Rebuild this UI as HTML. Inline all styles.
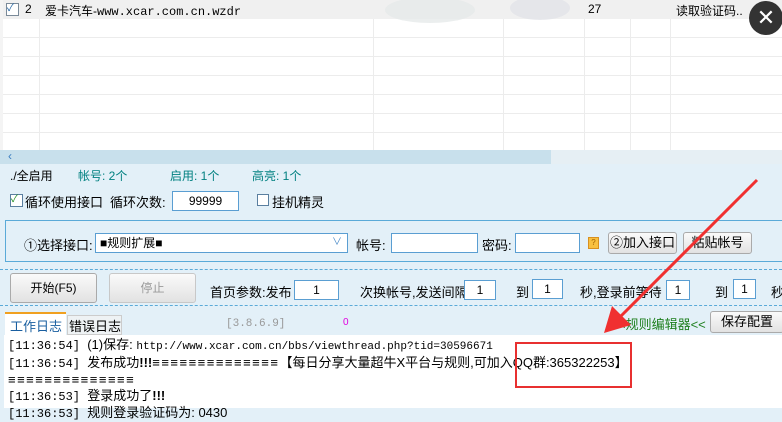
<!DOCTYPE html><html><head><meta charset="utf-8"><style>
body{margin:0;width:782px;height:408px;overflow:hidden;background:#e3f0f8;font-family:"Liberation Sans","Noto Sans CJK SC",sans-serif;font-size:12px;color:#000;position:relative}
.a{position:absolute;white-space:nowrap}
.in{position:absolute;background:#fff;border:1px solid #5a9ed2;height:18px;box-sizing:border-box;text-align:center;line-height:18px;font-size:12px}
.btn{position:absolute;background:linear-gradient(#fafafa,#e2e2e2);border:1px solid #aaa;border-radius:3px;box-sizing:border-box;text-align:center}
.mono{font-family:"Liberation Mono","Noto Sans CJK SC",monospace}
</style></head><body>
<div class="a" style="left:0;top:0;width:782px;height:150px;background:#fff"></div>
<div class="a" style="left:0;top:0;width:782px;height:19px;background:#f0f0f0"></div>
<svg class="a" style="left:0;top:0" width="782" height="150">
<g stroke="#ececec" stroke-width="1">
<line x1="0" y1="37.5" x2="782" y2="37.5"/><line x1="0" y1="56.5" x2="782" y2="56.5"/><line x1="0" y1="75.5" x2="782" y2="75.5"/><line x1="0" y1="94.5" x2="782" y2="94.5"/><line x1="0" y1="113.5" x2="782" y2="113.5"/><line x1="0" y1="132.5" x2="782" y2="132.5"/>
<line x1="39.5" y1="19" x2="39.5" y2="150"/><line x1="373.5" y1="19" x2="373.5" y2="150"/><line x1="503.5" y1="19" x2="503.5" y2="150"/><line x1="584.5" y1="19" x2="584.5" y2="150"/><line x1="630.5" y1="19" x2="630.5" y2="150"/><line x1="670.5" y1="19" x2="670.5" y2="150"/>
</g>
<rect x="0" y="0" width="3" height="150" fill="#f4f4f4"/>
<ellipse cx="430" cy="10" rx="45" ry="13" fill="#e6eaea" opacity=".8"/><ellipse cx="540" cy="8" rx="30" ry="12" fill="#e2e4e8" opacity=".8"/>
</svg>
<div class="a" style="left:6px;top:3px;width:11px;height:11px;border:1px solid #7a8a99;background:#fff;font-size:10px;line-height:10px;color:#1a5fa0">✓</div>
<div class="a" style="left:25px;top:2px">2</div>
<div class="a" style="left:45px;top:2px">爱卡汽车-<span class="mono" style="font-size:12px">www.xcar.com.cn.wzdr</span></div>
<div class="a" style="left:588px;top:2px">27</div>
<div class="a" style="left:676px;top:2px">读取验证码..</div>
<div class="a" style="left:749px;top:1px;width:34px;height:34px;border-radius:50%;background:#333;color:#fff;font-size:22px;line-height:33px;text-align:center">✕</div>
<div class="a" style="left:0;top:150px;width:551px;height:14px;background:#c8e0ec"></div>
<div class="a" style="left:551px;top:150px;width:231px;height:14px;background:#e6eff4"></div>
<div class="a" style="left:8px;top:149px;color:#3a7dc0;font-size:12px">‹</div>
<div class="a" style="left:10px;top:167px">./全启用</div>
<div class="a" style="left:78px;top:167px;color:#008080">帐号: 2个</div>
<div class="a" style="left:170px;top:167px;color:#008080">启用: 1个</div>
<div class="a" style="left:252px;top:167px;color:#008080">高亮: 1个</div>
<div class="a" style="left:10px;top:194px;width:11px;height:11px;border:1px solid #5a7fa0;background:#fff;font-size:10px;line-height:10px;color:#1a8a1a">✓</div>
<div class="a" style="left:25px;top:192px;font-size:13px">循环使用接口</div>
<div class="a" style="left:110px;top:192px;font-size:13px">循环次数:</div>
<div class="in" style="left:172px;top:191px;width:67px;height:20px">99999</div>
<div class="a" style="left:257px;top:194px;width:10px;height:10px;border:1px solid #5a7fa0;background:#fff"></div>
<div class="a" style="left:272px;top:192px;font-size:13px">挂机精灵</div>
<div class="a" style="left:5px;top:220px;width:790px;height:42px;border:1px solid #5aaad8;box-sizing:border-box"></div>
<div class="a" style="left:24px;top:235px;font-size:13px">①选择接口:</div>
<div class="in" style="left:95px;top:233px;width:253px;height:20px;text-align:left;padding-left:4px">■规则扩展■<span style="position:absolute;right:5px;color:#4a8ac8;font-size:10px">∨</span></div>
<div class="a" style="left:356px;top:235px;font-size:13px">帐号:</div>
<div class="in" style="left:391px;top:233px;width:87px;height:20px"></div>
<div class="a" style="left:482px;top:235px;font-size:13px">密码:</div>
<div class="in" style="left:515px;top:233px;width:65px;height:20px"></div>
<div class="a" style="left:588px;top:237px;width:9px;height:10px;background:#f8c040;border:1px solid #d89020;font-size:8px;line-height:10px;text-align:center;color:#a06000">?</div>
<div class="btn" style="left:608px;top:232px;width:69px;height:22px;line-height:20px;font-size:13px">②加入接口</div>
<div class="btn" style="left:683px;top:232px;width:69px;height:22px;line-height:20px;font-size:13px">粘贴帐号</div>
<div class="a" style="left:0;top:269px;width:782px;border-top:1px dashed #5aaad8"></div>
<div class="a" style="left:0;top:305px;width:782px;border-top:1px dashed #5aaad8"></div>
<div class="btn" style="left:10px;top:273px;width:87px;height:30px;line-height:28px">开始(F5)</div>
<div class="btn" style="left:109px;top:273px;width:87px;height:30px;line-height:28px;color:#999;border-color:#c8c8c8">停止</div>
<div class="a" style="left:210px;top:282px;font-size:13px">首页参数:发布</div>
<div class="in" style="left:294px;top:280px;width:45px;height:20px">1</div>
<div class="a" style="left:360px;top:282px;font-size:13px">次换帐号,发送间隔</div>
<div class="in" style="left:464px;top:280px;width:32px;height:20px">1</div>
<div class="a" style="left:516px;top:282px;font-size:13px">到</div>
<div class="in" style="left:532px;top:279px;width:31px;height:20px">1</div>
<div class="a" style="left:580px;top:282px;font-size:13px">秒,登录前等待</div>
<div class="in" style="left:666px;top:280px;width:24px;height:20px">1</div>
<div class="a" style="left:715px;top:282px;font-size:13px">到</div>
<div class="in" style="left:733px;top:279px;width:23px;height:20px">1</div>
<div class="a" style="left:771px;top:282px;font-size:13px">秒</div>
<div class="a" style="left:5px;top:312px;width:61px;height:23px;background:#fff;border-top:2px solid #f0a020;box-sizing:border-box"></div>
<div class="a" style="left:10px;top:316px;color:#1a5fa0;font-size:13px">工作日志</div>
<div class="a" style="left:67px;top:315px;width:55px;height:20px;background:#eef2f4;border:1px solid #ccc;box-sizing:border-box"></div>
<div class="a" style="left:69px;top:316px;font-size:13px">错误日志</div>
<div class="a mono" style="left:226px;top:318px;color:#999;font-size:11px">[3.8.6.9]</div>
<div class="a" style="left:343px;top:317px;color:#e000e0;font-size:10px">0</div>
<div class="a" style="left:618px;top:314px;color:#208020;font-size:13px">&lt;规则编辑器&lt;&lt;</div>
<div class="btn" style="left:710px;top:311px;width:74px;height:22px;line-height:20px;font-size:13px">保存配置</div>
<div class="a" style="left:4px;top:335px;width:778px;height:73px;background:#fff"></div>
<div class="a" style="left:8px;top:337px;line-height:16px;font-size:13px"><span class="mono" style="font-size:12px">[11:36:54] </span>(1)保存: <span class="mono" style="font-size:11px">http://www.xcar.com.cn/bbs/viewthread.php?tid=30596671</span><br><span class="mono" style="font-size:12px">[11:36:54] </span>发布成功<b>!!!</b><span style="letter-spacing:1.5px">≡≡≡≡≡≡≡≡≡≡≡≡≡≡</span>【每日分享大量超牛X平台与规则,可加入QQ群:365322253】<br><span style="letter-spacing:1.5px">≡≡≡≡≡≡≡≡≡≡≡≡≡≡</span><br><span class="mono" style="font-size:12px">[11:36:53] </span>登录成功了<b>!!!</b><br><span class="mono" style="font-size:12px">[11:36:53] </span>规则登录验证码为: 0430</div>
<div class="a" style="left:515px;top:342px;width:117px;height:46px;border:2px solid #e83030;box-sizing:border-box"></div>
<svg class="a" style="left:0;top:0" width="782" height="408"><line x1="757" y1="180" x2="620" y2="317" stroke="#f03030" stroke-width="3"/><polygon points="604,333 612,306 631,325" fill="#f03030"/></svg>
</body></html>
